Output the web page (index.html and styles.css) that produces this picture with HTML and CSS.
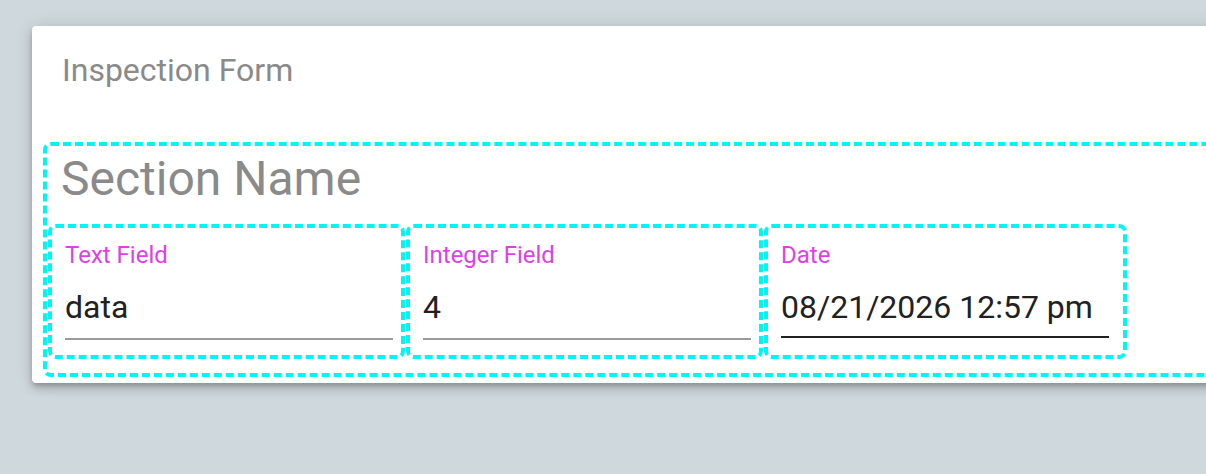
FILE: index.html
```html
<!DOCTYPE html>
<html lang="en">
<head>
<meta charset="utf-8">
<title>Inspection Form</title>
<link rel="stylesheet" href="styles.css">
</head>
<body>
<div class="card">
  <div class="card-title">Inspection Form</div>
  <div class="section">
    <div class="section-name">Section Name</div>
    <div class="fields">
      <div class="field">
        <div class="field-label">Text Field</div>
        <div class="field-input">data</div>
      </div>
      <div class="field">
        <div class="field-label">Integer Field</div>
        <div class="field-input">4</div>
      </div>
      <div class="field field-wide">
        <div class="field-label">Date</div>
        <div class="field-input field-input-active">08/21/2026 12:57 pm</div>
      </div>
    </div>
  </div>
</div>
</body>
</html>
```

FILE: styles.css
```css
html, body {
  margin: 0;
  padding: 0;
}
body {
  background: #cfd8dc;
  width: 1206px;
  height: 474px;
  overflow: hidden;
  font-family: Roboto, "Liberation Sans", sans-serif;
  padding: 26px 0 0 32px;
  box-sizing: border-box;
}
.card {
  width: 1240px;
  background: #fff;
  border-radius: 4px;
  box-shadow: 0 3px 5px -1px rgba(0,0,0,0.2), 0 6px 10px 0 rgba(0,0,0,0.14), 0 1px 18px 0 rgba(0,0,0,0.12);
  padding: 25px 0 6px 11px;
  box-sizing: border-box;
}
.card-title {
  font-size: 32px;
  line-height: 38px;
  color: #8a8a8a;
  padding-left: 19px;
  margin-bottom: 53px;
}
.section {
  border: 4px dashed #00f5f5;
  border-radius: 8px;
  padding: 5px 0 14px 1px;
}
.section-name {
  font-size: 48px;
  line-height: 56px;
  color: #8a8a8a;
  padding-left: 13px;
  margin-bottom: 17px;
}
.fields {
  display: flex;
  gap: 1px;
}
.field {
  width: 357px;
  box-sizing: border-box;
  border: 4px dashed #00f5f5;
  border-radius: 8px;
  padding: 13px 8px 15px 13px;
}
.field-wide {
  width: 363px;
  padding-right: 14px;
}
.field-label {
  font-size: 24px;
  line-height: 28px;
  color: #e23ee8;
  margin-bottom: 19px;
}
.field-input {
  font-size: 32px;
  line-height: 38px;
  color: #212121;
  padding-bottom: 12px;
  border-bottom: 2px solid #9a9a9a;
}
.field-input-active {
  padding-bottom: 10px;
  border-bottom-color: #212121;
}
```
